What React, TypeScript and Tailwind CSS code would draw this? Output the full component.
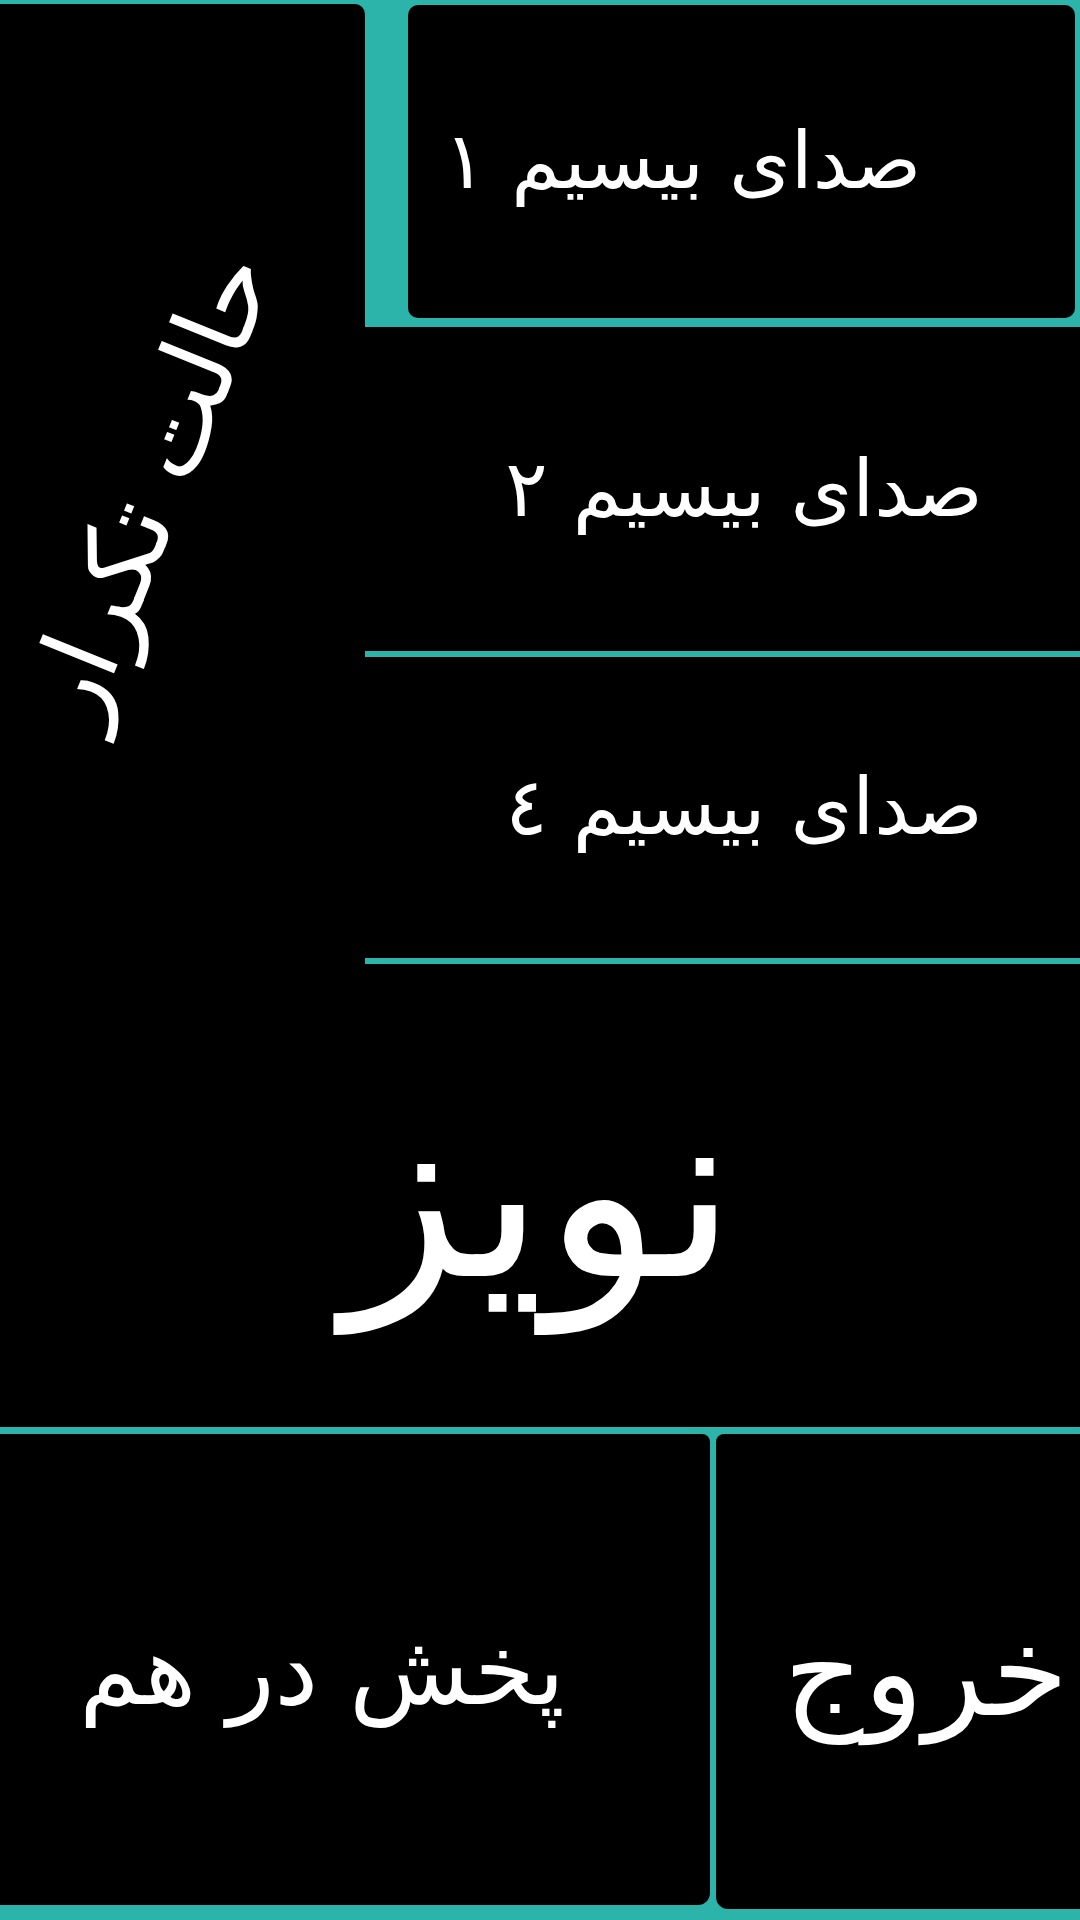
import React from "react";

const Radio = ({ label, className }: { label: string; className: string }) => (
  <div className={className}>
    <span dir="rtl" className="text-[79px] leading-none whitespace-nowrap">
      {label}
    </span>
  </div>
);

const App = () => {
  return (
    <div className="w-[1080px] h-[1920px] bg-[#2cb4aa] flex flex-col overflow-hidden text-white font-['DejaVu_Sans',sans-serif]">
      <div className="flex h-[964px]">
        {/* repeat mode panel */}
        <div className="w-[365px] mt-[4px] bg-black rounded-tr-[10px] flex items-center justify-center pr-[64px] pt-[6px] overflow-hidden">
          <span dir="rtl" className="block rotate-[-68deg] text-[106px] leading-none whitespace-nowrap">
            حالت تکرار
          </span>
        </div>

        <div className="flex-1 flex flex-col">
          <div className="h-[327px] pt-[5px] pb-[9px] pl-[43px] pr-[5px]">
            <Radio
              label="صدای بیسیم ١"
              className="w-full h-full bg-black rounded-[10px] flex items-center justify-center pr-[118px]"
            />
          </div>
          <Radio
            label="صدای بیسیم ٢"
            className="h-[324px] bg-black flex items-center justify-center pl-[43px]"
          />
          <div className="h-[6px]" />
          <Radio
            label="صدای بیسیم ٤"
            className="h-[301px] bg-black flex items-center justify-center pl-[43px]"
          />
          <div className="h-[6px]" />
        </div>
      </div>

      <div className="h-[463px] bg-black flex items-center justify-center pb-[8px]">
        <span dir="rtl" className="text-[242px] leading-none whitespace-nowrap">
          نویز
        </span>
      </div>

      <div className="h-[7px]" />

      <div className="flex gap-[6px] h-[486px]">
        <div className="w-[710px] h-[471px] bg-black rounded-tr-[8px] rounded-br-[12px] flex items-center justify-center pr-[66px]">
          <span dir="rtl" className="text-[98px] leading-none whitespace-nowrap">
            پخش در هم
          </span>
        </div>
        <div className="flex-1 h-[475px] bg-black rounded-tl-[8px] rounded-bl-[12px] flex items-center justify-center pl-[56px]">
          <span dir="rtl" className="text-[124px] leading-none whitespace-nowrap">
            خروج
          </span>
        </div>
      </div>
    </div>
  );
};

export default App;
